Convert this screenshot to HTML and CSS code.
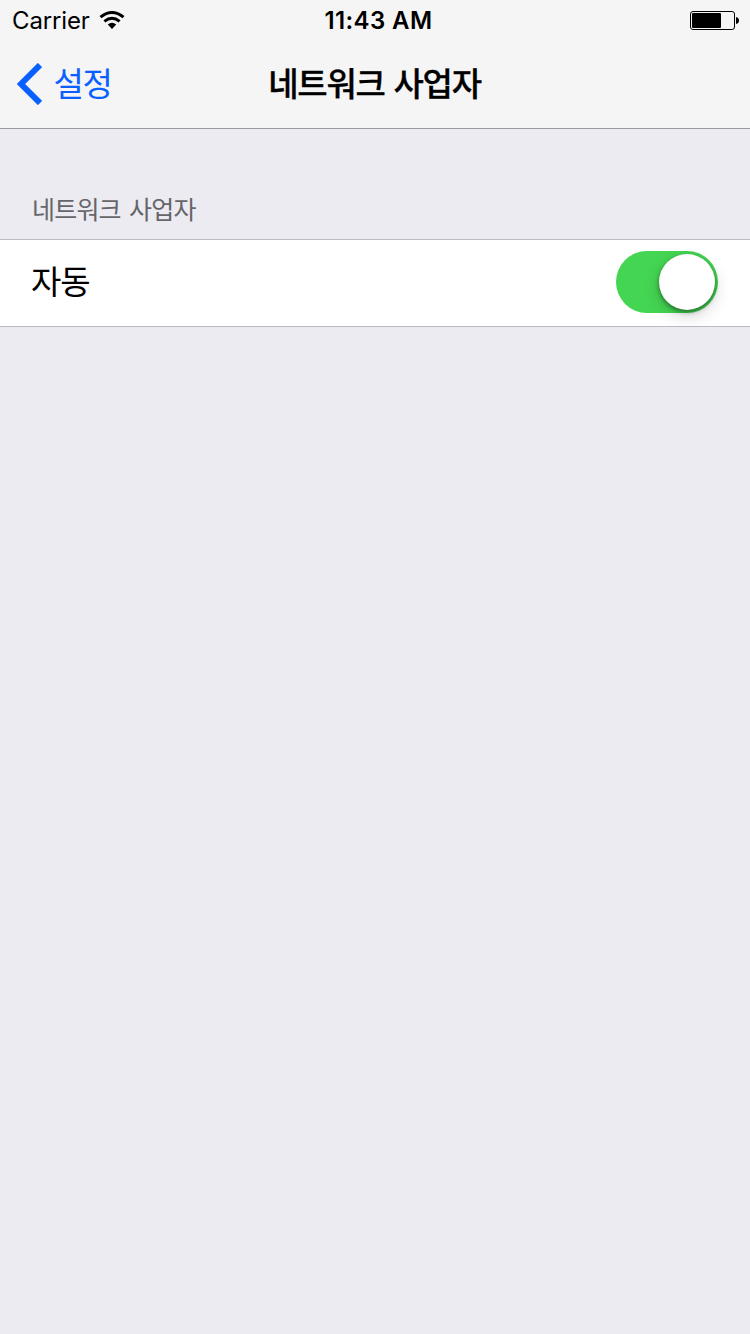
FILE: index.html
```html
<!DOCTYPE html>
<html lang="ko">
<head>
<meta charset="utf-8">
<title>네트워크 사업자</title>
<link rel="stylesheet" href="styles.css">
</head>
<body>
<header class="header">
  <div class="status-bar">
    <div class="status-left">
      <span class="carrier">Carrier</span>
      <svg class="wifi" width="26" height="18" viewBox="0 0 26 18" fill="none" stroke="#000" stroke-width="3">
        <path d="M1.5 6.1Q13-3.1 24.5 6.1"/>
        <path d="M5.4 10.3Q13 4.1 20.6 10.3"/>
        <path d="M8.8 13.6Q13 9.8 17.2 13.6L13 18Z" fill="#000" stroke="none"/>
      </svg>
    </div>
    <time class="clock">11:43 AM</time>
    <svg class="battery" width="50" height="20" viewBox="0 0 50 20">
      <rect x=".5" y=".5" width="44" height="18" rx="2.5" fill="none" stroke="#000"/>
      <rect x="2" y="2" width="29" height="15" rx="1"/>
      <path d="M46 6Q49 6.5 49 9.5T46 13Z"/>
    </svg>
  </div>
  <nav class="nav-bar">
    <a class="back">
      <svg width="26" height="42" viewBox="0 0 26 42" fill="none" stroke="#0a60ff" stroke-width="6">
        <path d="M24 2L5 21L24 40"/>
      </svg>
      <span class="back-label">설정</span>
    </a>
    <h1 class="title">네트워크 사업자</h1>
  </nav>
</header>
<main>
  <h2 class="section-title"><span class="section-label">네트워크 사업자</span></h2>
  <div class="row">
    <span class="row-label">자동</span>
    <div class="switch" role="switch" aria-checked="true"><div class="knob"></div></div>
  </div>
</main>
</body>
</html>
```
FILE: styles.css
```css
* { box-sizing: border-box; }
body {
  margin: 0;
  min-height: 1334px;
  background: #ebebf1;
  color: #000;
  font-family: Inter, "Noto Sans CJK KR", sans-serif;
  overflow: hidden;
}
.header {
  height: 129px;
  background: #f5f5f5;
  border-bottom: 1px solid #9a99a2;
}
.status-bar {
  height: 42px;
  display: grid;
  grid-template-columns: 1fr auto 1fr;
  align-items: center;
  padding: 0 10px 0 12px;
  line-height: 42px;
}
.status-left { display: flex; align-items: center; gap: 9px; }
.carrier { font-size: 24px; letter-spacing: -.15px; }
.wifi { margin-top: -2px; }
.clock { font-size: 24px; font-weight: 600; letter-spacing: .4px; padding-left: 5px; }
.battery { justify-self: end; }
.nav-bar {
  height: 86px;
  display: grid;
  grid-template-columns: 1fr auto 1fr;
  align-items: center;
  padding: 0 16px 2px;
}
.back { display: flex; align-items: center; gap: 11.5px; color: #0a60ff; }
.back-label { font-size: 33px; line-height: 48px; letter-spacing: -1.3px; }
.title {
  margin: 0;
  padding-right: 1px;
  font-size: 33px;
  line-height: 48px;
  font-weight: 500;
  letter-spacing: -1.3px;
  word-spacing: 1.5px;
  -webkit-text-stroke: .3px #000;
}
.section-title {
  margin: 0;
  height: 110px;
  padding: 61px 32px 0;
  font-size: 25px;
  line-height: 40px;
  font-weight: 400;
  letter-spacing: -.8px;
  word-spacing: 2px;
  color: #65656a;
}
.row {
  height: 88px;
  display: flex;
  align-items: center;
  justify-content: space-between;
  padding: 0 32px 2px 31px;
  background: #fff;
  border-top: 1px solid #bcbbc1;
  border-bottom: 1px solid #bcbbc1;
}
.row-label { font-size: 33px; line-height: 48px; letter-spacing: -1.2px; }
.switch {
  width: 102px;
  height: 62px;
  padding: 3px;
  display: flex;
  justify-content: flex-end;
  border-radius: 31px;
  background: #44d552;
}
.knob {
  width: 56px;
  height: 56px;
  border-radius: 50%;
  background: #fff;
  box-shadow: 0 2px 4px rgba(0, 0, 0, .4), 0 6px 16px rgba(0, 0, 0, .18);
}
```
